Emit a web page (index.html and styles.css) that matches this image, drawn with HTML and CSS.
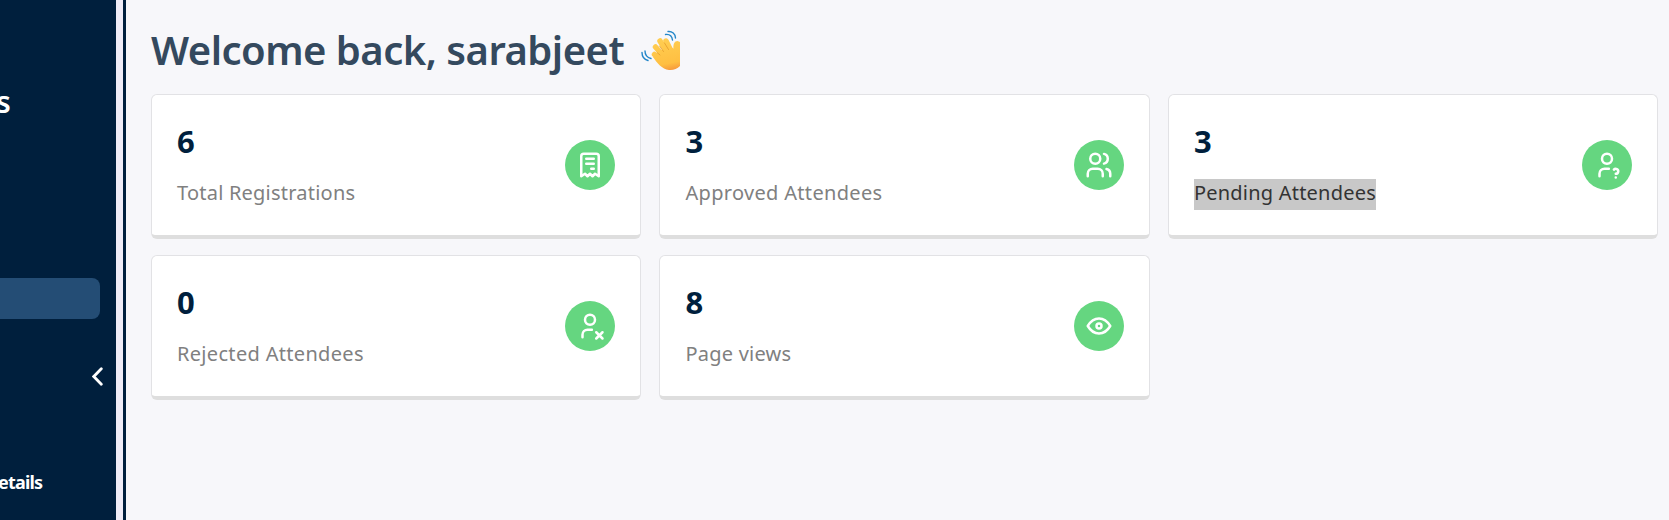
FILE: index.html
```html
<!DOCTYPE html>
<html lang="en">
<head>
    <meta charset="UTF-8">
    <meta name="viewport" content="width=device-width, initial-scale=1.0">
    <title>Dashboard</title>
    <link rel="stylesheet" href="styles.css">
</head>
<body>
    <div class="layout">
        <aside class="sidebar">
            <div class="brand">s</div>
            <div class="nav-item active"></div>
            <div class="collapse">
                <svg width="11" height="19" viewBox="0 0 11 19"><path d="M9.3 1.8L1.8 9.5l7.5 7.700"/></svg>
            </div>
            <div class="nav-title">etails</div>
        </aside>
        <div class="divider"></div>

        <main class="content">
            <header class="welcome">
                <h1>Welcome back, sarabjeet</h1>
                <svg class="wave" width="39" height="42" viewBox="0 0 39 42">
                    <defs>
                        <linearGradient id="skin" gradientUnits="userSpaceOnUse" x1="18" y1="8" x2="25" y2="42">
                            <stop offset="0" stop-color="#ffcf52"/>
                            <stop offset="0.8" stop-color="#ffbf42"/>
                            <stop offset="1" stop-color="#f79a3c"/>
                        </linearGradient>
                    </defs>
                    <g class="fingers">
                        <path d="M13.500 25.500l6 5"/>
                        <path d="M14.500 18l8 9"/>
                        <path d="M19 12l7.500 12"/>
                        <path d="M25 12l5.500 11"/>
                    </g>
                    <path class="palm" d="M12 28l7-6 10-4 3.500 1.500c-.5-4 1-7.500 4-7.500l2.500 1v24c-3 3-7 4.500-11 4-7-1-12-7-16-13z"/>
                    <path class="crease" d="M16 23.500l3 2.500M18.500 17l4 5.500M23.500 14l4 6.500"/>
                    <path class="motion" d="M24.500 5.500c4-.5 6.500 2 7 5.500M27 2.500c4-.5 7.500 2.500 7.500 6.500M4 22c0 4 2 6.500 6 7.500M1 23.500c0 4 2.500 7 6 8"/>
                </svg>
            </header>

            <div class="cards">
                <div class="card">
                    <div class="info">
                        <h2>6</h2>
                        <p><span class="label">Total Registrations</span></p>
                    </div>
                    <div class="icon">
                        <svg viewBox="0 0 24 24">
                            <path d="M5 21v-16a2 2 0 0 1 2 -2h10a2 2 0 0 1 2 2v16l-3 -2l-2 2l-2 -2l-2 2l-2 -2l-3 2"/>
                            <path d="M9 7h6M9 11h6M13 15h2"/>
                        </svg>
                    </div>
                </div>

                <div class="card">
                    <div class="info">
                        <h2>3</h2>
                        <p><span class="label wide">Approved Attendees</span></p>
                    </div>
                    <div class="icon">
                        <svg viewBox="0 0 24 24">
                            <circle cx="9" cy="7" r="4"/>
                            <path d="M3 21v-2a4 4 0 0 1 4 -4h4a4 4 0 0 1 4 4v2"/>
                            <path d="M16 3.130a4 4 0 0 1 0 7.750M21 21v-2a4 4 0 0 0 -3 -3.850"/>
                        </svg>
                    </div>
                </div>

                <div class="card">
                    <div class="info">
                        <h2>3</h2>
                        <p><span class="label selected">Pending Attendees</span></p>
                    </div>
                    <div class="icon">
                        <svg viewBox="0 0 24 24">
                            <circle cx="12" cy="7" r="4"/>
                            <path d="M6 21v-2a4 4 0 0 1 4 -4h3.500"/>
                            <path d="M19 22v.010M19 19a2.003 2.003 0 0 0 .914 -3.782a1.980 1.980 0 0 0 -2.414 .483"/>
                        </svg>
                    </div>
                </div>

                <div class="card">
                    <div class="info">
                        <h2>0</h2>
                        <p><span class="label wide">Rejected Attendees</span></p>
                    </div>
                    <div class="icon">
                        <svg viewBox="0 0 24 24">
                            <circle cx="12" cy="7" r="4"/>
                            <path d="M6 21v-2a4 4 0 0 1 4 -4h3.500"/>
                            <path d="M22 22l-5 -5M17 22l5 -5"/>
                        </svg>
                    </div>
                </div>

                <div class="card">
                    <div class="info">
                        <h2>8</h2>
                        <p><span class="label">Page views</span></p>
                    </div>
                    <div class="icon">
                        <svg viewBox="0 0 24 24">
                            <circle cx="12" cy="12" r="2"/>
                            <path d="M21 12c-2.400 4 -5.400 6 -9 6s-6.600 -2 -9 -6c2.400 -4 5.400 -6 9 -6s6.600 2 9 6"/>
                        </svg>
                    </div>
                </div>
            </div>
        </main>
    </div>
</body>
</html>
```

FILE: styles.css
```css
:root {
    --navy: #001f3d;
    --green: #65d680;
    --background: #f7f7fa;
}

* {
    margin: 0;
    padding: 0;
    box-sizing: border-box;
}

body {
    font-family: 'Noto Sans', 'Open Sans', sans-serif;
    background-color: var(--background);
    overflow: hidden;
}

.layout {
    display: flex;
    height: 520px;
}

.sidebar {
    width: 116px;
    background-color: var(--navy);
    color: #fff;
}

.brand {
    height: 278px;
    padding-top: 82px;
    margin-left: -4px;
    font-size: 30px;
    font-weight: 600;
    line-height: 40px;
}

.nav-item {
    width: 100px;
    height: 41px;
    border-radius: 0 8px 8px 0;
}

.nav-item.active {
    background-color: #244d75;
}

.collapse {
    display: flex;
    justify-content: flex-end;
    padding: 48px 13px 0 0;
}

.collapse svg {
    fill: none;
    stroke: #fff;
    stroke-width: 2.8;
    stroke-linecap: round;
}

.nav-title {
    margin: 83px 0 0 -2px;
    font-size: 18px;
    font-weight: 700;
    line-height: 26px;
    letter-spacing: -0.8px;
}

.divider {
    width: 10px;
    background-color: #efecf7;
    border-right: 3px solid var(--navy);
}

.content {
    flex: 1;
    padding: 26px 11px 0 25px;
}

.welcome {
    display: flex;
    align-items: flex-start;
    height: 68px;
}

h1 {
    width: 490px;
    color: #34495e;
    font-size: 40px;
    font-weight: 600;
    line-height: 48px;
    letter-spacing: -0.52px;
    white-space: nowrap;
}

.wave {
    margin-top: 3px;
}

.fingers {
    fill: none;
    stroke: url(#skin);
    stroke-width: 5.5;
    stroke-linecap: round;
}

.palm {
    fill: url(#skin);
}

.crease {
    fill: none;
    stroke: #e39a2b;
    stroke-width: 0.8;
    stroke-linecap: round;
}

.motion {
    fill: none;
    stroke: #2286c9;
    stroke-width: 1.4;
    stroke-linecap: round;
}

.cards {
    display: grid;
    grid-template-columns: repeat(3, 1fr);
    gap: 16px 18.4px;
}

.card {
    display: flex;
    justify-content: space-between;
    align-items: center;
    height: 145px;
    padding: 0 25px;
    background-color: #fff;
    border: 1px solid #e2e2e5;
    border-bottom: 4px solid #dedede;
    border-radius: 6px;
}

h2 {
    color: var(--navy);
    font-size: 31px;
    font-weight: 700;
    line-height: 40px;
    margin-bottom: 18px;
}

.info {
    padding-top: 1px;
}

.label {
    display: block;
    height: 31px;
    color: #808080;
    font-size: 20px;
    line-height: 27px;
    letter-spacing: 0.22px;
    white-space: nowrap;
}

.label.wide {
    letter-spacing: 0.32px;
}

.selected {
    background-color: #c8c8c8;
    color: #333;
}

.icon {
    display: flex;
    justify-content: center;
    align-items: center;
    width: 50px;
    height: 50px;
    border-radius: 50%;
    background-color: var(--green);
}

.icon svg {
    width: 30px;
    height: 30px;
    fill: none;
    stroke: #fff;
    stroke-width: 2;
    stroke-linecap: round;
    stroke-linejoin: round;
}
```
